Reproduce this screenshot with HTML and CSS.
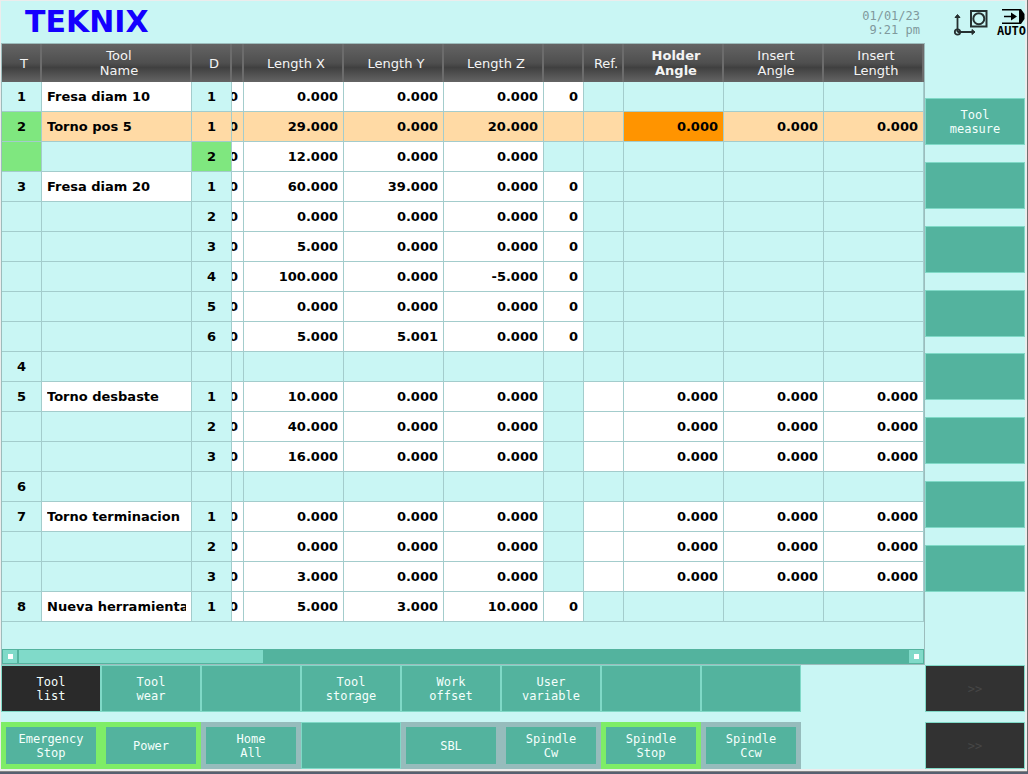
FILE: index.html
```html
<!DOCTYPE html>
<html lang="en">
<head>
<meta charset="utf-8">
<title>Teknix - Tool list</title>
<link rel="stylesheet" href="styles.css">
</head>
<body>
<div class="screen">
  <header class="topbar">
    <h1 class="logo">TEKNIX</h1>
    <time class="clock">01/01/23<br>9:21 pm</time>
    <div class="status">
      <svg class="axes" width="36" height="28" viewBox="0 0 36 28" fill="none" stroke="#263030" stroke-width="1.8">
        <path d="M5.500 23V7M5.500 23H21"/>
        <path d="M3 8.500L5.500 5.500L8 8.500zM20 20.500L23 23L20 25.500z" fill="#263030" stroke-width="1"/>
        <circle cx="5.500" cy="23" r="2.700"/>
        <rect x="19" y="2" width="15.500" height="15.500" stroke-width="2"/>
        <circle cx="26.800" cy="9.700" r="5.500" stroke-width="2"/>
      </svg>
      <div class="mode">
        <svg width="24" height="15" viewBox="0 0 24 15">
          <path d="M0 0h18v1.500H0zM0 13.500h18V15H0zM2 6.700h10v1.600H2z"/>
          <path d="M9 3.500L15 7.500L9 11.500zM17 0h2l3.500 5v5L19 15h-2z"/>
        </svg>
        <span class="mode-name">AUTO</span>
      </div>
    </div>
  </header>

  <main class="work">
    <section class="panel">
      <table class="tools">
        <colgroup>
          <col class="w-s"><col class="w-name"><col class="w-s"><col class="w-cut">
          <col class="w-l"><col class="w-l"><col class="w-l"><col class="w-s"><col class="w-s">
          <col class="w-l"><col class="w-l"><col class="w-l">
        </colgroup>
        <thead>
          <tr><th>T</th><th>Tool<br>Name</th><th>D</th><th></th><th>Length X</th><th>Length Y</th><th>Length Z</th><th></th><th>Ref.</th><th class="current">Holder<br>Angle</th><th>Insert<br>Angle</th><th>Insert<br>Length</th></tr>
        </thead>
        <tbody>
          <tr><td class="id">1</td><td class="name"><div>Fresa diam 10</div></td><td class="id">1</td><td class="v cut">0</td><td class="v">0.000</td><td class="v">0.000</td><td class="v">0.000</td><td class="v">0</td><td></td><td></td><td></td><td></td></tr>
          <tr class="selected"><td class="id active">2</td><td class="name"><div>Torno pos 5</div></td><td class="id">1</td><td class="v cut">0</td><td class="v">29.000</td><td class="v">0.000</td><td class="v">20.000</td><td></td><td></td><td class="v cursor">0.000</td><td class="v">0.000</td><td class="v">0.000</td></tr>
          <tr><td class="id active"></td><td></td><td class="id active">2</td><td class="v cut">0</td><td class="v">12.000</td><td class="v">0.000</td><td class="v">0.000</td><td></td><td></td><td></td><td></td><td></td></tr>
          <tr><td class="id">3</td><td class="name"><div>Fresa diam 20</div></td><td class="id">1</td><td class="v cut">0</td><td class="v">60.000</td><td class="v">39.000</td><td class="v">0.000</td><td class="v">0</td><td></td><td></td><td></td><td></td></tr>
          <tr><td></td><td></td><td class="id">2</td><td class="v cut">0</td><td class="v">0.000</td><td class="v">0.000</td><td class="v">0.000</td><td class="v">0</td><td></td><td></td><td></td><td></td></tr>
          <tr><td></td><td></td><td class="id">3</td><td class="v cut">0</td><td class="v">5.000</td><td class="v">0.000</td><td class="v">0.000</td><td class="v">0</td><td></td><td></td><td></td><td></td></tr>
          <tr><td></td><td></td><td class="id">4</td><td class="v cut">0</td><td class="v">100.000</td><td class="v">0.000</td><td class="v">-5.000</td><td class="v">0</td><td></td><td></td><td></td><td></td></tr>
          <tr><td></td><td></td><td class="id">5</td><td class="v cut">0</td><td class="v">0.000</td><td class="v">0.000</td><td class="v">0.000</td><td class="v">0</td><td></td><td></td><td></td><td></td></tr>
          <tr><td></td><td></td><td class="id">6</td><td class="v cut">0</td><td class="v">5.000</td><td class="v">5.001</td><td class="v">0.000</td><td class="v">0</td><td></td><td></td><td></td><td></td></tr>
          <tr><td class="id">4</td><td></td><td></td><td></td><td></td><td></td><td></td><td></td><td></td><td></td><td></td><td></td></tr>
          <tr><td class="id">5</td><td class="name"><div>Torno desbaste</div></td><td class="id">1</td><td class="v cut">0</td><td class="v">10.000</td><td class="v">0.000</td><td class="v">0.000</td><td></td><td class="v"></td><td class="v">0.000</td><td class="v">0.000</td><td class="v">0.000</td></tr>
          <tr><td></td><td></td><td class="id">2</td><td class="v cut">0</td><td class="v">40.000</td><td class="v">0.000</td><td class="v">0.000</td><td></td><td class="v"></td><td class="v">0.000</td><td class="v">0.000</td><td class="v">0.000</td></tr>
          <tr><td></td><td></td><td class="id">3</td><td class="v cut">0</td><td class="v">16.000</td><td class="v">0.000</td><td class="v">0.000</td><td></td><td class="v"></td><td class="v">0.000</td><td class="v">0.000</td><td class="v">0.000</td></tr>
          <tr><td class="id">6</td><td></td><td></td><td></td><td></td><td></td><td></td><td></td><td></td><td></td><td></td><td></td></tr>
          <tr><td class="id">7</td><td class="name"><div>Torno terminacion</div></td><td class="id">1</td><td class="v cut">0</td><td class="v">0.000</td><td class="v">0.000</td><td class="v">0.000</td><td></td><td class="v"></td><td class="v">0.000</td><td class="v">0.000</td><td class="v">0.000</td></tr>
          <tr><td></td><td></td><td class="id">2</td><td class="v cut">0</td><td class="v">0.000</td><td class="v">0.000</td><td class="v">0.000</td><td></td><td class="v"></td><td class="v">0.000</td><td class="v">0.000</td><td class="v">0.000</td></tr>
          <tr><td></td><td></td><td class="id">3</td><td class="v cut">0</td><td class="v">3.000</td><td class="v">0.000</td><td class="v">0.000</td><td></td><td class="v"></td><td class="v">0.000</td><td class="v">0.000</td><td class="v">0.000</td></tr>
          <tr><td class="id">8</td><td class="name"><div>Nueva herramienta</div></td><td class="id">1</td><td class="v cut">0</td><td class="v">5.000</td><td class="v">3.000</td><td class="v">10.000</td><td class="v">0</td><td></td><td></td><td></td><td></td></tr>
        </tbody>
      </table>
      <div class="scrollbar">
        <button class="step" aria-label="Scroll left"></button>
        <div class="track"><div class="thumb"></div></div>
        <button class="step" aria-label="Scroll right"></button>
      </div>
    </section>

    <nav class="side" aria-label="Actions">
      <button class="key">Tool<br>measure</button>
      <button class="key" aria-label="Action 2"></button>
      <button class="key" aria-label="Action 3"></button>
      <button class="key" aria-label="Action 4"></button>
      <button class="key" aria-label="Action 5"></button>
      <button class="key" aria-label="Action 6"></button>
      <button class="key" aria-label="Action 7"></button>
      <button class="key" aria-label="Action 8"></button>
    </nav>
  </main>

  <footer class="softkeys">
    <nav class="keyrow" aria-label="Pages">
      <div class="keys">
        <button class="key chosen">Tool<br>list</button>
        <button class="key">Tool<br>wear</button>
        <button class="key" aria-label="Page 3"></button>
        <button class="key">Tool<br>storage</button>
        <button class="key">Work<br>offset</button>
        <button class="key">User<br>variable</button>
        <button class="key" aria-label="Page 7"></button>
        <button class="key" aria-label="Page 8"></button>
      </div>
      <button class="key more" disabled>&gt;&gt;</button>
    </nav>
    <div class="keyrow">
      <div class="keys">
        <button class="key lamp on">Emergency<br>Stop</button>
        <button class="key lamp on">Power</button>
        <button class="key lamp">Home<br>All</button>
        <button class="key" aria-label="Machine key 4"></button>
        <button class="key lamp">SBL</button>
        <button class="key lamp">Spindle<br>Cw</button>
        <button class="key lamp on">Spindle<br>Stop</button>
        <button class="key lamp">Spindle<br>Ccw</button>
      </div>
      <button class="key more" disabled>&gt;&gt;</button>
    </div>
  </footer>
</div>
</body>
</html>
```
FILE: styles.css
```css
* { box-sizing: border-box; }

body {
  margin: 0;
  min-height: 100vh;
  display: flex;
  flex-direction: column;
  padding: 0 1px 3px 0;
  background: #566070;
  font-family: "DejaVu Sans", sans-serif;
  font-size: 13px;
}

.screen {
  flex: 1;
  display: flex;
  flex-direction: column;
  background: #c9f6f4;
  border: solid #ececec;
  border-width: 1px 2px 2px 1px;
  box-shadow: 0 1px #858585, 1px 0 #707070;
}

.topbar {
  display: flex;
  align-items: flex-start;
  height: 42px;
}

.logo {
  flex: 1;
  margin: 0;
  padding: 3px 0 0 24px;
  font-size: 30px;
  line-height: 35px;
  color: #1400ff;
}

.clock {
  padding-top: 8px;
  font: 12px/14px "DejaVu Sans Mono", monospace;
  text-align: right;
  color: #80999c;
}

.status {
  display: flex;
  gap: 9px;
  width: 105px;
  padding: 8px 0 0 32px;
}

.axes { flex: none; }

.mode {
  flex: none;
  width: 28px;
}

.mode svg {
  display: block;
  margin-left: 5px;
}

.mode-name {
  display: block;
  font: bold 12px/14px "DejaVu Sans Mono", monospace;
  color: #000;
}

.work {
  flex: 1;
  display: flex;
}

.panel {
  flex: 1;
  display: flex;
  flex-direction: column;
  justify-content: space-between;
  border: 1px solid #9cbcbc;
}

.tools {
  width: 100%;
  table-layout: fixed;
  border-collapse: separate;
  border-spacing: 0;
  color: #000;
}

.w-s { width: 40px; }
.w-name { width: 150px; }
.w-cut { width: 12px; }
.w-l { width: 100px; }

.tools th {
  height: 38px;
  padding: 0 0 0 6px;
  border-right: 2px solid #6c6c6c;
  background: linear-gradient(#646464, #4f4f4f 50%, #404040 62%, #646464);
  font-weight: normal;
  line-height: 15px;
  color: #f4f4f4;
}

.tools th.current { font-weight: bold; }

.tools td {
  height: 30px;
  padding: 0 5px;
  border: solid #a3cccc;
  border-width: 0 1px 1px 0;
  font-weight: bold;
  line-height: 16px;
  overflow: hidden;
}

.tools .id {
  padding: 0;
  text-align: center;
}

.tools .name, .tools .v { background: #fff; }

.tools .name div {
  overflow: hidden;
  white-space: nowrap;
}

.tools .v { text-align: right; }

/* narrow remainder of a column scrolled under the fixed ones */
.tools .cut {
  padding: 0 6px 0 0;
  direction: rtl;
  text-align: start;
}

.tools .selected td { background: #ffdaa5; }
.tools .id.active, .tools .selected .id.active { background: #7fe77f; }
.tools .selected .cursor { background: #ff9400; }

.scrollbar {
  display: flex;
  gap: 2px;
  padding: 1px;
  background: #53b39e;
}

.step {
  display: flex;
  justify-content: center;
  align-items: center;
  width: 14px;
  height: 13px;
  padding: 0;
  border: 0;
  background: #80dac9;
}

.step::before {
  content: "";
  width: 5px;
  height: 5px;
  background: #fff;
}

.track {
  flex: 1;
  display: flex;
}

.thumb {
  width: 27.5%;
  background: #80dac9;
}

.side {
  display: flex;
  flex-direction: column;
  justify-content: space-between;
  width: 100px;
  padding: 55px 0 73px;
}

.key {
  height: 47px;
  padding: 0;
  border: 1px solid #80d9c7;
  background: #53b39e;
  font: 12px/14px "DejaVu Sans Mono", monospace;
  color: #f4fffc;
}

.key.chosen { background: #2a2a2a; }
.key.lamp { border: 5px solid #96bcbc; }
.key.on { border-color: #7eed67; }

.key.more {
  width: 100px;
  background: #323232;
  color: #464646;
}

.softkeys {
  display: flex;
  flex-direction: column;
  gap: 10px;
}

.keyrow { display: flex; }

.keys {
  flex: 1;
  display: flex;
  padding-right: 124px;
}

.keys .key { width: 12.5%; }
```
